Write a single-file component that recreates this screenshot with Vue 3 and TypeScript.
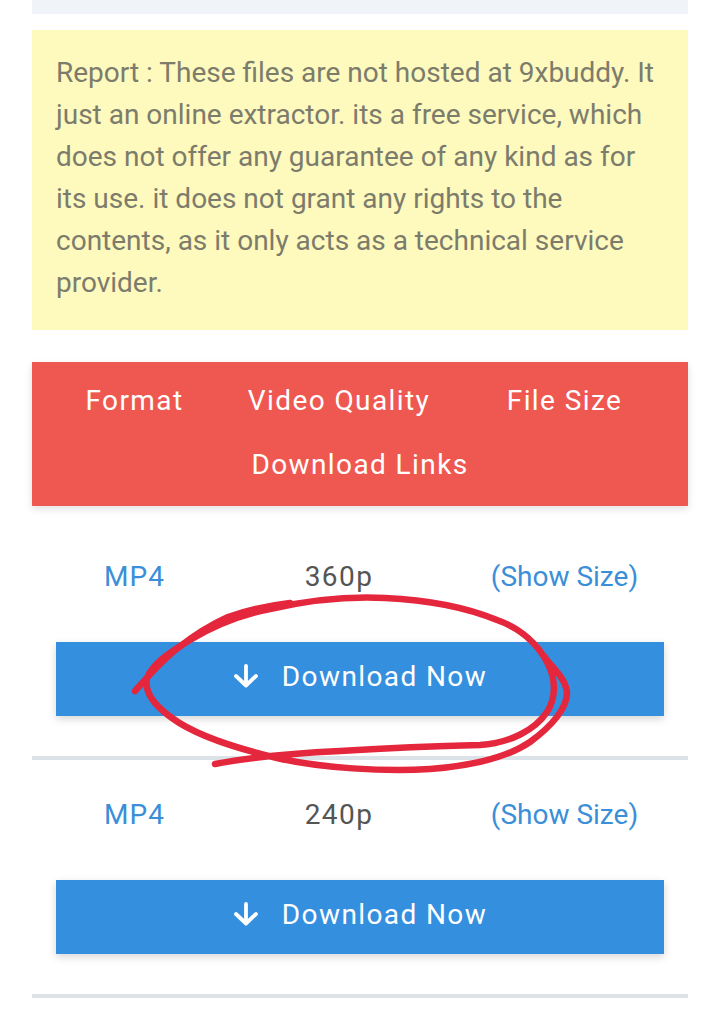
<script setup lang="ts">
interface Row { format: string; quality: string }
const rows: Row[] = [
  { format: 'MP4', quality: '360p' },
  { format: 'MP4', quality: '240p' },
]
const heads = ['Format', 'Video Quality', 'File Size']
</script>

<template>
  <main class="page">
    <div class="topbar"></div>
    <p class="report">Report : These files are not hosted at 9xbuddy. It just an online extractor. its a free service, which does not offer any guarantee of any kind as for its use. it does not grant any rights to the contents, as it only acts as a technical service provider.</p>
    <div class="head">
      <div class="cells">
        <span v-for="h in heads" :key="h">{{ h }}</span>
      </div>
      <div class="links">Download Links</div>
    </div>
    <div class="rows">
      <section v-for="r in rows" :key="r.quality" class="row">
        <div class="cells info">
          <a class="link format">{{ r.format }}</a>
          <span class="quality">{{ r.quality }}</span>
          <a class="link">(Show Size)</a>
        </div>
        <button class="dl" type="button">
          <svg class="arrow" width="26" height="26" viewBox="0 0 26 26" fill="none" stroke="#fff" stroke-width="3.8" stroke-linecap="round" stroke-linejoin="round">
            <path d="M13 3v19M3 13l10 9.500L23 13" />
          </svg>
          <span>Download Now</span>
        </button>
      </section>
    </div>
    <svg class="scribble" width="720" height="1036" viewBox="0 0 720 1036" fill="none" stroke="#e4273c" stroke-width="6.500" stroke-linecap="round" stroke-linejoin="round">
      <path d="M215 764C255 756 300 753 340 751C390 748 440 746 480 745C510 743 535 730 547 712C556 698 556 680 548 664C538 644 520 628 497 620C470 609 430 600 385 598C345 596 305 601 270 609C240 615 215 625 190 640C170 652 152 664 147 678C144 692 155 706 172 718C195 735 235 748 277 758C320 768 385 772 430 769C470 766 505 759 530 742C552 726 567 708 567 693C566 678 552 668 544 656" />
      <path d="M135 691C145 680 160 662 178 648C193 636 208 626 228 617C245 611 265 606 290 603" />
    </svg>
  </main>
</template>

<style scoped>
.page {
  position: relative;
  width: 720px;
  height: 1036px;
  padding: 0 32px;
  box-sizing: border-box;
  overflow: hidden;
  background: #fff;
  font-family: Roboto, "Liberation Sans", sans-serif;
}
.topbar {
  height: 14px;
  background: #f0f4f8;
}
.report {
  margin: 16px 0 32px;
  padding: 22px 24px 26px;
  height: 300px;
  box-sizing: border-box;
  background: #fef9bd;
  color: #7c7c6c;
  font-size: 28px;
  line-height: 42px;
}
.head {
  height: 144px;
  background: #ef5850;
  color: #fff;
  font-size: 28px;
  letter-spacing: 1.4px;
  box-shadow: 0 3px 8px rgba(0, 0, 0, 0.12);
}
.cells {
  display: grid;
  grid-template-columns: 205px 204px 247px;
  height: 76px;
  box-sizing: border-box;
  align-items: center;
  text-align: center;
}
.links {
  height: 68px;
  padding-bottom: 16px;
  box-sizing: border-box;
  display: flex;
  align-items: center;
  justify-content: center;
}
.rows {
  margin-top: 16px;
}
.row {
  height: 238px;
  border-bottom: 4px solid #dce3e8;
  box-sizing: border-box;
  padding: 16px 24px 0;
}
.info {
  margin: 0 -24px;
  font-size: 28px;
}
.link {
  color: #3a8fd8;
}
.format {
  letter-spacing: 1px;
}
.quality {
  color: #555;
  letter-spacing: 1.4px;
}
.dl {
  display: flex;
  align-items: center;
  justify-content: center;
  gap: 23px;
  width: 100%;
  height: 74px;
  margin-top: 28px;
  padding: 0 0 6px;
  border: 0;
  background: #348fdf;
  color: #fff;
  font: inherit;
  font-size: 28px;
  letter-spacing: 1.4px;
  box-shadow: 0 3px 8px rgba(0, 0, 0, 0.16);
}
.arrow {
  flex: none;
}
.scribble {
  position: absolute;
  left: 0;
  top: 0;
  pointer-events: none;
}
</style>
